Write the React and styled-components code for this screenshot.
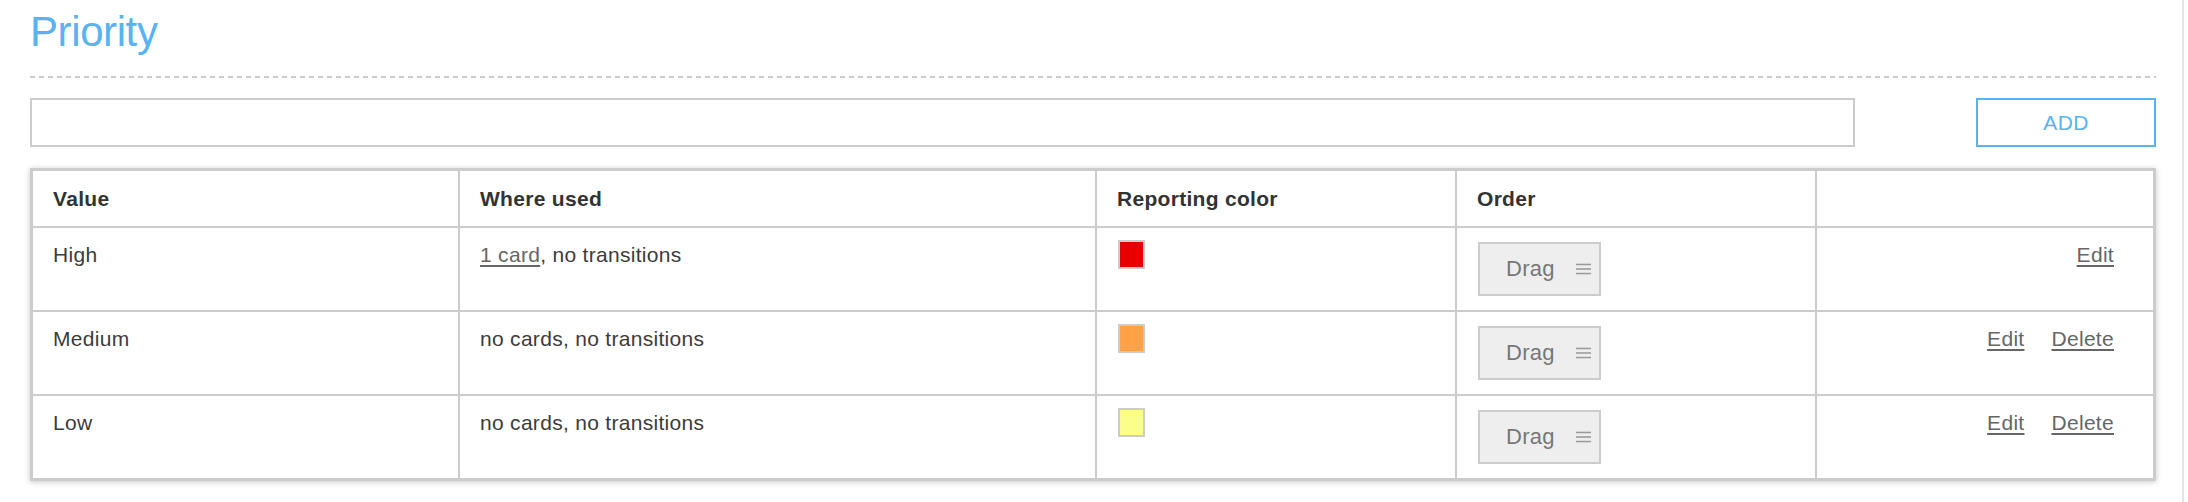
import styled, { createGlobalStyle } from "styled-components"

const GlobalStyle = createGlobalStyle`
  body {
    margin: 0;
    background: #fff;
    font-family: "Liberation Sans", Arial, sans-serif;
  }
`

const rows = [
  { value: "High", cards: 1, color: "#e80000", canDelete: false },
  { value: "Medium", cards: 0, color: "#ffa245", canDelete: true },
  { value: "Low", cards: 0, color: "#fbff8a", canDelete: true },
]

function DragIcon() {
  return (
    <svg width="20" height="14" viewBox="0 0 20 14">
      <rect x="0" y="0" width="20" height="2" fill="#999" />
      <rect x="0" y="6" width="20" height="2" fill="#999" />
      <rect x="0" y="12" width="20" height="2" fill="#999" />
    </svg>
  )
}

export default function App() {
  return (
    <Page>
      <GlobalStyle />
      <Main>
        <Title>Priority</Title>
        <Rule />
        <AddRow>
          <TextInput type="text" />
          <AddButton>ADD</AddButton>
        </AddRow>
        <Table>
          <HeadCell>Value</HeadCell>
          <HeadCell>Where used</HeadCell>
          <HeadCell>Reporting color</HeadCell>
          <HeadCell>Order</HeadCell>
          <HeadCell />
          {rows.map(r => (
            <Row key={r.value}>
              <Cell>{r.value}</Cell>
              <Cell>
                {r.cards > 0 ? (
                  <>
                    <TextLink href="#">{r.cards} card</TextLink>, no transitions
                  </>
                ) : (
                  "no cards, no transitions"
                )}
              </Cell>
              <SwatchCell>
                <Swatch $color={r.color} />
              </SwatchCell>
              <DragCell>
                <DragButton>
                  Drag
                  <DragIcon />
                </DragButton>
              </DragCell>
              <Actions>
                <TextLink href="#">Edit</TextLink>
                {r.canDelete && <TextLink href="#">Delete</TextLink>}
              </Actions>
            </Row>
          ))}
        </Table>
      </Main>
    </Page>
  )
}

const Page = styled.div`
  display: flex;
  min-height: 502px;
`

const Main = styled.div`
  box-sizing: border-box;
  width: 2184px;
  padding: 0 26px 0 30px;
  border-right: 2px solid #e6e6e6;
`

const Title = styled.h1`
  margin: 0;
  padding-top: 10px;
  font-size: 42px;
  line-height: 44px;
  font-weight: 400;
  letter-spacing: -0.4px;
  color: #58b3f1;
`

const Rule = styled.div`
  height: 2px;
  margin-top: 22px;
  background-image: repeating-linear-gradient(
    to right,
    #cccccc 0,
    #cccccc 5px,
    transparent 5px,
    transparent 9px
  );
`

const AddRow = styled.div`
  display: flex;
  justify-content: space-between;
  align-items: center;
  margin-top: 20px;
`

const TextInput = styled.input`
  box-sizing: border-box;
  width: 1825px;
  height: 49px;
  border: 2px solid #cccccc;
  padding: 0 12px;
  font: inherit;
  font-size: 21px;
  outline: none;
`

const AddButton = styled.button`
  box-sizing: border-box;
  width: 180px;
  height: 49px;
  border: 2px solid #58b3f1;
  background: #fff;
  color: #58b3f1;
  font-family: "Liberation Sans", Arial, sans-serif;
  font-size: 21px;
  letter-spacing: 0.4px;
  cursor: pointer;
`

const Table = styled.div`
  margin-top: 21px;
  display: grid;
  grid-template-columns: 425px 635px 358px 358px 1fr;
  gap: 2px;
  background: #cccccc;
  border: 3px solid #cccccc;
  box-shadow: 0 1px 6px rgba(0, 0, 0, 0.22);
  font-size: 21px;
  letter-spacing: 0.3px;
  line-height: 28px;
`

const Row = styled.div`
  display: contents;
`

const HeadCell = styled.div`
  background: #fff;
  padding: 14px 20px 13px;
  font-weight: 700;
  color: #333;
`

const Cell = styled.div`
  background: #fff;
  padding: 13px 20px;
  color: #3c3c3c;
`

const SwatchCell = styled.div`
  background: #fff;
  padding: 12px 21px;
`

const Swatch = styled.div`
  box-sizing: border-box;
  width: 27px;
  height: 29px;
  border: 2px solid #cccccc;
  background: ${p => p.$color};
`

const DragCell = styled.div`
  background: #fff;
  padding: 14px 21px;
`

const DragButton = styled.div`
  box-sizing: border-box;
  display: inline-flex;
  align-items: center;
  gap: 21px;
  width: 123px;
  height: 54px;
  padding: 0 8px 0 26px;
  border: 2px solid #cccccc;
  background: #eeeeee;
  color: #777;
  font-size: 22px;
  cursor: move;
`

const Actions = styled.div`
  background: #fff;
  display: flex;
  justify-content: flex-end;
  align-items: flex-start;
  gap: 27px;
  padding: 13px 39px 13px 20px;
`

const TextLink = styled.a`
  color: #666;
  text-decoration: underline;
  text-underline-offset: 3px;
`
